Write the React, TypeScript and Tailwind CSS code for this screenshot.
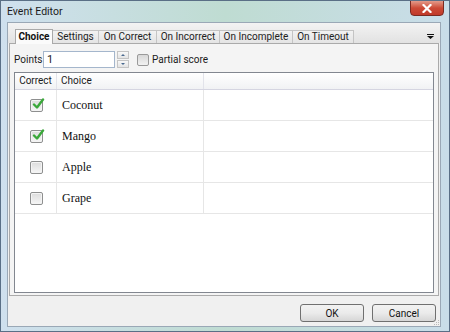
import React from "react";

const tabs = ["Choice", "Settings", "On Correct", "On Incorrect", "On Incomplete", "On Timeout"];
const tabWidths = [38, 46, 58, 63, 73, 61];

const rows = [
  { name: "Coconut", checked: true },
  { name: "Mango", checked: true },
  { name: "Apple", checked: false },
  { name: "Grape", checked: false },
];

function CheckBox({ checked }: { checked: boolean }) {
  return (
    <span className="relative inline-block w-[13px] h-[13px] rounded-[2px] border border-[#8e8f8f] bg-gradient-to-b from-[#dcdcdc] to-[#f6f6f6] shadow-[inset_0_0_0_1px_#f4f4f4]">
      {checked && (
        <svg viewBox="0 0 13 13" className="absolute -top-[2px] left-[1px] w-[13px] h-[13px]">
          <path d="M2 6.5 L5 9.5 L11 1.5" fill="none" stroke="#3aa83a" strokeWidth="2.4" strokeLinecap="round" strokeLinejoin="round" />
        </svg>
      )}
    </span>
  );
}

export default function App() {
  return (
    <div
      className="w-[450px] h-[332px] flex flex-col overflow-hidden border border-[#5a6f86] bg-gradient-to-r from-[#cfe0ee] via-[#bfdcd2] to-[#c9dde9] whitespace-nowrap"
      style={{ fontFamily: 'Roboto, "Liberation Sans", sans-serif' }}
    >
      {/* title bar */}
      <div className="h-[21px] flex items-start justify-between shrink-0">
        <span className="pl-[6px] pt-[4px] text-[10.5px] text-[#1b1b1b] leading-[14px]">Event Editor</span>
        <div className="mr-[5px] w-[34px] h-[16px] -mt-px rounded-b-[4px] border border-[#7a2a22] bg-gradient-to-b from-[#e29a8a] via-[#cc4a36] to-[#c0392a] flex items-center justify-center">
          <svg viewBox="0 0 10 9" className="w-[10px] h-[9px]">
            <path d="M1.5 1 L8.5 8 M8.5 1 L1.5 8" stroke="#fff" strokeWidth="2.2" strokeLinecap="square" />
          </svg>
        </div>
      </div>

      {/* client area */}
      <div className="flex-1 ml-[6px] mr-[8px] mb-[4px] border border-[#9aa8b6] bg-[#f0f0f0] flex flex-col">
        {/* tab strip */}
        <div className="h-[20px] shrink-0 bg-gradient-to-b from-[#f3f3f3] to-[#e2e2e2] flex items-end pl-[7px] pr-[5px] relative">
          {tabs.map((t, i) => (
            <div
              key={t}
              style={{ width: tabWidths[i] }}
              className={
                i === 0
                  ? "h-[15px] border border-b-0 border-[#a9a9a9] bg-[#fbfbfb] text-[10px] font-bold text-[#111] leading-[14px] text-center relative z-10 -mb-px"
                  : "h-[13px] border border-b-0 border-l-0 border-[#c4c4c4] bg-gradient-to-b from-[#f2f2f2] to-[#e4e4e4] text-[10px] text-[#222] leading-[12px] text-center"
              }
            >
              {t}
            </div>
          ))}
          <svg viewBox="0 0 7 5" className="absolute right-[6px] top-[11px] w-[7px] h-[5px]">
            <path d="M0 0 H7 V1 H0 Z M0 2 H7 L3.5 5 Z" fill="#111" />
          </svg>
        </div>

        {/* tab panel */}
        <div className="h-[253px] mx-[1px] border border-[#aaaaaa] bg-[#f4f4f4] flex flex-col px-[4px] pt-[7px]">
          <div className="flex items-center h-[17px] text-[10px] text-[#1b1b1b]">
            <span className="w-[29px]">Points</span>
            <div className="w-[72px] h-[17px] border border-[#a4b6cc] bg-white text-[11px] leading-[15px] pl-[3px] text-[#222]">1</div>
            <div className="ml-[2px] flex flex-col gap-[1px]">
              <div className="w-[12px] h-[8px] border border-[#c4c4c4] bg-gradient-to-b from-[#f8f8f8] to-[#e4e4e4] flex items-center justify-center">
                <svg viewBox="0 0 4 2" className="w-[4px] h-[2px]"><path d="M0 2 L2 0 L4 2 Z" fill="#4a6a90" /></svg>
              </div>
              <div className="w-[12px] h-[8px] border border-[#c4c4c4] bg-gradient-to-b from-[#f8f8f8] to-[#e4e4e4] flex items-center justify-center">
                <svg viewBox="0 0 4 2" className="w-[4px] h-[2px]"><path d="M0 0 L2 2 L4 0 Z" fill="#4a6a90" /></svg>
              </div>
            </div>
            <span className="ml-[8px] w-[12px] h-[12px] border border-[#9a9a9a] rounded-[2px] bg-gradient-to-b from-[#d8d8d8] to-[#f2f2f2]" />
            <span className="ml-[3px]">Partial score</span>
          </div>

          {/* table */}
          <div className="mt-[4px] h-[221px] border border-[#828790] bg-white flex flex-col">
            <div className="h-[17px] shrink-0 flex bg-gradient-to-b from-[#ffffff] to-[#f1f2f4] border-b border-[#d5d5e1] text-[10px] text-[#1b1b1b] leading-[16px]">
              <div className="w-[42px] border-r border-[#e2e3ea] text-center">Correct</div>
              <div className="w-[147px] border-r border-[#e2e3ea] pl-[4px]">Choice</div>
              <div className="flex-1" />
            </div>
            {rows.map((r) => (
              <div key={r.name} className="h-[31px] flex border-b border-[#e6e6e6]">
                <div className="w-[42px] border-r border-[#e6e6e6] flex items-center justify-center pl-[1px]">
                  <CheckBox checked={r.checked} />
                </div>
                <div
                  className="w-[147px] border-r border-[#e6e6e6] flex items-center pl-[5px] text-[12px] text-[#111]"
                  style={{ fontFamily: '"Liberation Serif", serif' }}
                >
                  {r.name}
                </div>
                <div className="flex-1" />
              </div>
            ))}
          </div>
        </div>

        {/* buttons */}
        <div className="flex-1 flex justify-end items-start gap-[8px] pt-[8px] pr-[4px] relative">
          {["OK", "Cancel"].map((b) => (
            <button
              key={b}
              className="w-[64px] h-[18px] rounded-[3px] border border-[#707070] bg-gradient-to-b from-[#f2f2f2] via-[#ebebeb] to-[#d6d6d6] text-[10px] text-[#111] leading-[15px]"
            >
              {b}
            </button>
          ))}
          <div className="absolute right-[1px] bottom-[1px] grid grid-cols-3 gap-[1px]">
            {[0, 0, 1, 0, 1, 1, 1, 1, 1].map((v, i) => (
              <span key={i} className={`w-[1px] h-[1px] ${v ? "bg-[#b8b8b8]" : "bg-transparent"}`} />
            ))}
          </div>
        </div>
      </div>
    </div>
  );
}
